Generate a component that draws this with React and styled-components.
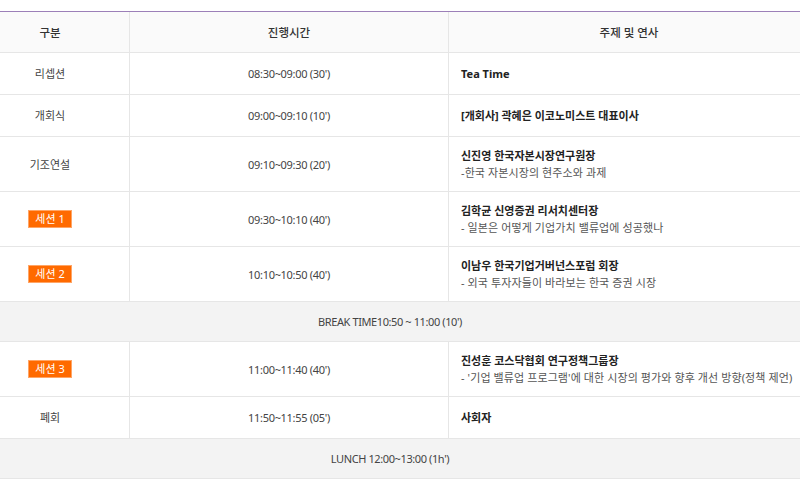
import React from "react";
import styled, { createGlobalStyle } from "styled-components";

const GlobalStyle = createGlobalStyle`
  html, body {
    margin: 0;
    padding: 0;
    background: #fff;
    overflow: hidden;
  }
  body {
    font-family: "Noto Sans", "Noto Sans CJK KR", sans-serif;
    font-size: 11px;
    color: #444;
  }
`;

const Page = styled.div`
  padding-top: 11px;
  width: 800px;
  overflow: hidden;
`;

const Table = styled.div`
  margin-left: -29px;
  width: 838px;
  border-top: 1px solid #9c7fb8;
`;

const Row = styled.div`
  display: grid;
  grid-template-columns: 159px 319px 1fr;
  border-bottom: 1px solid #e6e6e6;
  background: ${props => (props.$head ? "#fafafa" : props.$gray ? "#f3f3f3" : "#fff")};
`;

const Cell = styled.div`
  display: flex;
  flex-direction: column;
  justify-content: center;
  align-items: ${props => (props.$left ? "flex-start" : "center")};
  min-height: ${props => (props.$head ? "40px" : "41px")};
  box-sizing: border-box;
  padding: ${props => (props.$left ? "10px 12px" : "10px 0")};
  line-height: 17px;
  border-right: ${props => (props.$last ? "none" : "1px solid #e6e6e6")};
  color: ${props => (props.$head ? "#333" : "#444")};
  font-size: ${props => (props.$head ? "11.5px" : "11px")};
  font-weight: ${props => (props.$head ? 500 : 400)};
  letter-spacing: ${props => (props.$time ? "-0.3px" : "0")};
  text-align: center;
  white-space: nowrap;
`;

const FullCell = styled.div`
  grid-column: 1 / -1;
  display: flex;
  align-items: center;
  justify-content: center;
  min-height: 39px;
  color: #444;
  letter-spacing: -0.4px;
`;

const Title = styled.strong`
  font-weight: 700;
  color: #222;
`;

const Desc = styled.span`
  color: #555;
  letter-spacing: 0.1px;
`;

const Badge = styled.span`
  display: inline-block;
  background: #ff6a00;
  border: 1px solid #ffa566;
  color: #fff;
  padding: 0 6px;
  line-height: 16px;
`;

const rows = [
  { label: "리셉션", time: "08:30~09:00 (30')", title: "Tea Time" },
  { label: "개회식", time: "09:00~09:10 (10')", title: "[개회사] 곽혜은 이코노미스트 대표이사" },
  {
    label: "기조연설",
    time: "09:10~09:30 (20')",
    title: "신진영 한국자본시장연구원장",
    desc: "-한국 자본시장의 현주소와 과제"
  },
  {
    label: "세션 1",
    badge: true,
    time: "09:30~10:10 (40')",
    title: "김학균 신영증권 리서치센터장",
    desc: "- 일본은 어떻게 기업가치 밸류업에 성공했나"
  },
  {
    label: "세션 2",
    badge: true,
    time: "10:10~10:50 (40')",
    title: "이남우 한국기업거버넌스포럼 회장",
    desc: "- 외국 투자자들이 바라보는 한국 증권 시장"
  },
  { full: "BREAK TIME10:50 ~ 11:00 (10')" },
  {
    label: "세션 3",
    badge: true,
    time: "11:00~11:40 (40')",
    title: "진성훈 코스닥협회 연구정책그룹장",
    desc: "- '기업 밸류업 프로그램'에 대한 시장의 평가와 향후 개선 방향(정책 제언)"
  },
  { label: "폐회", time: "11:50~11:55 (05')", title: "사회자" },
  { full: "LUNCH 12:00~13:00 (1h')" }
];

export default function App() {
  return (
    <Page>
      <GlobalStyle />
      <Table>
        <Row $head>
          <Cell $head>구분</Cell>
          <Cell $head>진행시간</Cell>
          <Cell $head $last>주제 및 연사</Cell>
        </Row>
        {rows.map((r, i) =>
          r.full ? (
            <Row key={i} $gray>
              <FullCell>{r.full}</FullCell>
            </Row>
          ) : (
            <Row key={i}>
              <Cell>{r.badge ? <Badge>{r.label}</Badge> : r.label}</Cell>
              <Cell $time>{r.time}</Cell>
              <Cell $left $last>
                <Title>{r.title}</Title>
                {r.desc && <Desc>{r.desc}</Desc>}
              </Cell>
            </Row>
          )
        )}
      </Table>
    </Page>
  );
}
